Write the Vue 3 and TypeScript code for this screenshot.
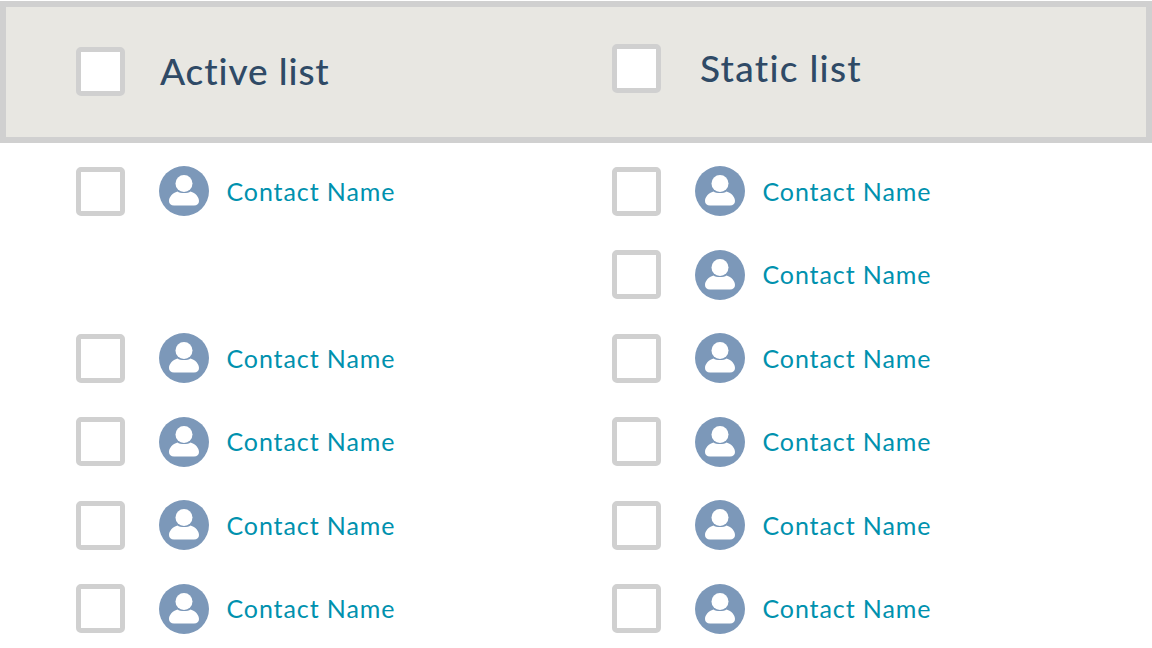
<script setup lang="ts">
const left: boolean[] = [true, false, true, true, true, true]
const right: boolean[] = [true, true, true, true, true, true]
const columns = [left, right]
</script>

<template>
  <div class="page">
    <header class="head">
      <div class="head-col active">
        <span class="box"></span>
        <h2 class="title">Active list</h2>
      </div>
      <div class="head-col static">
        <span class="box"></span>
        <h2 class="title">Static list</h2>
      </div>
    </header>
    <main class="lists">
      <ul v-for="(col, c) in columns" :key="c" class="list">
        <li v-for="(show, r) in col" :key="r" class="row">
          <template v-if="show">
            <span class="box"></span>
            <svg class="avatar" viewBox="0 0 50 50" aria-hidden="true">
              <circle cx="25" cy="25" r="25" fill="#7c98b9" />
              <circle cx="25" cy="17.5" r="8.5" fill="#fff" />
              <path d="M18.500 25.500C21 27.500 29 27.500 31.500 25.500C36.500 27 40 31 40 35C40 37.800 38 39.500 35 39.500H15C12 39.500 10 37.800 10 35C10 31 13.500 27 18.500 25.500Z" fill="#fff" />
            </svg>
            <a class="name">Contact Name</a>
          </template>
        </li>
      </ul>
    </main>
  </div>
</template>

<style>
html, body { margin: 0; background: #fff; }
</style>

<style scoped>
.page {
  width: 1152px;
  height: 648px;
  overflow: hidden;
  padding-top: 1px;
  box-sizing: border-box;
  font-family: Lato, "Open Sans", sans-serif;
}
.head {
  height: 142px;
  box-sizing: border-box;
  border: 6px solid #d0d0d0;
  background: #e8e7e2;
  display: grid;
  grid-template-columns: 536px 1fr;
  padding-left: 70px;
}
.head-col { display: flex; align-items: center; }
.head-col.active { padding-bottom: 2px; }
.head-col.static { padding-bottom: 8px; }
.box {
  width: 49px;
  height: 49px;
  flex: none;
  box-sizing: border-box;
  border: 5px solid #d0d0d0;
  border-radius: 5px;
  background: #fff;
}
.title {
  margin: 0;
  font-size: 37px;
  font-weight: 500;
  line-height: 44px;
  color: #2f4a66;
}
.active .title { margin-left: 35px; letter-spacing: 0.9px; }
.static .title { margin-left: 39px; letter-spacing: 1.3px; }
.lists {
  display: grid;
  grid-template-columns: 536px 1fr;
  padding: 23.75px 0 0 76px;
}
.list {
  list-style: none;
  margin: 0;
  padding: 0;
  display: grid;
  grid-auto-rows: 49px;
  row-gap: 34.5px;
}
.row { display: flex; align-items: center; }
.avatar { width: 50px; height: 50px; margin-left: 34px; flex: none; }
.name {
  margin-left: 17.500px;
  margin-bottom: 1px;
  font-size: 25px;
  line-height: 30px;
  color: #0091ae;
  letter-spacing: 0.9px;
}
</style>
